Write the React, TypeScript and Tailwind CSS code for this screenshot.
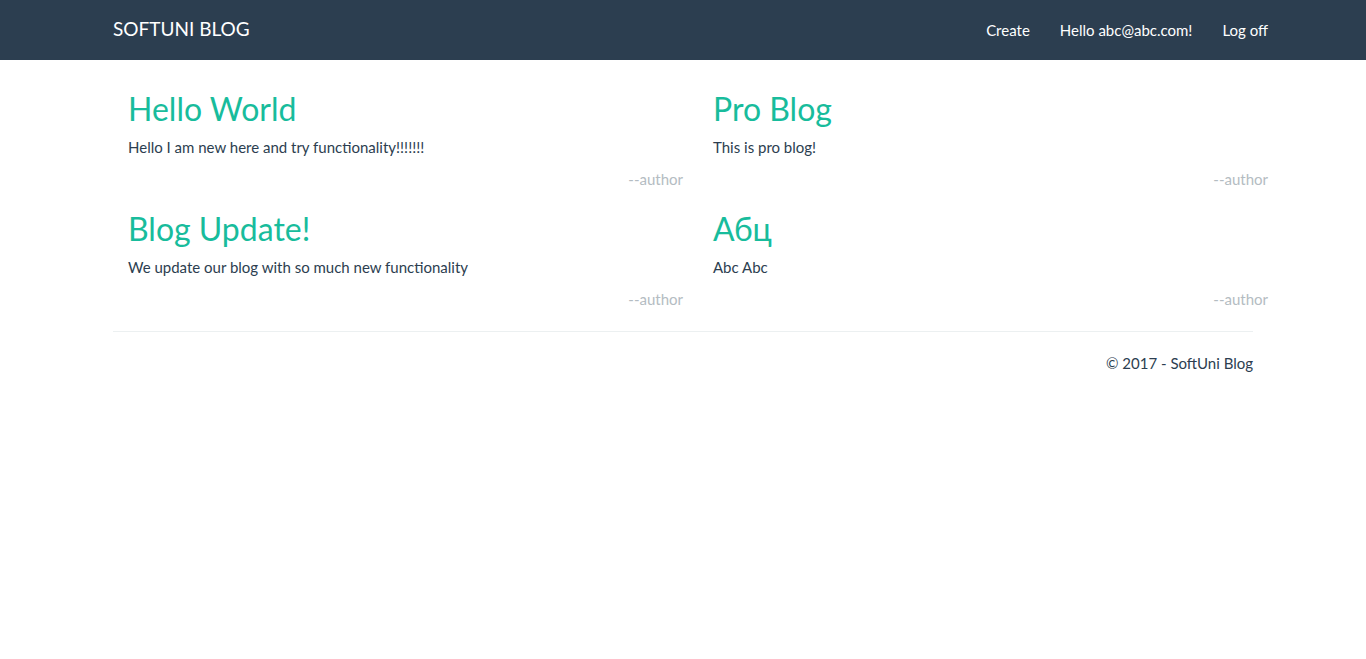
const posts = [
  { title: 'Hello World', body: 'Hello I am new here and try functionality!!!!!!!' },
  { title: 'Pro Blog', body: 'This is pro blog!' },
  { title: 'Blog Update!', body: 'We update our blog with so much new functionality' },
  { title: 'Абц', body: 'Abc Abc' },
]

export default function App() {
  return (
    <div className="min-h-screen bg-white text-[15px] leading-[21px] text-[#2c3e50]" style={{ fontFamily: 'Lato, "Noto Sans", sans-serif' }}>
      {/* Navbar */}
      <nav className="h-[60px] bg-[#2c3e50]">
        <div className="mx-auto flex h-full w-[1170px] items-center justify-between pl-[15px]">
          <a className="text-[19px] leading-[20px] text-white -mt-[2px]">SOFTUNI BLOG</a>
          <ul className="flex items-center text-white">
            <li className="px-[15px]">Create</li>
            <li className="px-[15px]">Hello abc@abc.com!</li>
            <li className="pl-[15px]">Log off</li>
          </ul>
        </div>
      </nav>

      {/* Posts */}
      <main className="mx-auto w-[1170px] px-[15px]">
        <div className="grid w-[1170px] grid-cols-2 pt-[32px]">
          {posts.map((p, i) => (
            <article key={i} className={'px-[15px] ' + (i >= 2 ? 'pt-[22px]' : '')}>
              <h2 className="text-[32px] leading-[34px] text-[#18bc9c]">{p.title}</h2>
              <p className="mt-[10.5px] mb-[11.5px]">{p.body}</p>
              <p className="text-right text-[#b4bcc2]">--author</p>
            </article>
          ))}
        </div>

        <hr className="mt-[21px] border-t border-[#ecf0f1]" />
        <footer className="mt-[21px]">
          <p className="text-right">© 2017 - SoftUni Blog</p>
        </footer>
      </main>
    </div>
  )
}
